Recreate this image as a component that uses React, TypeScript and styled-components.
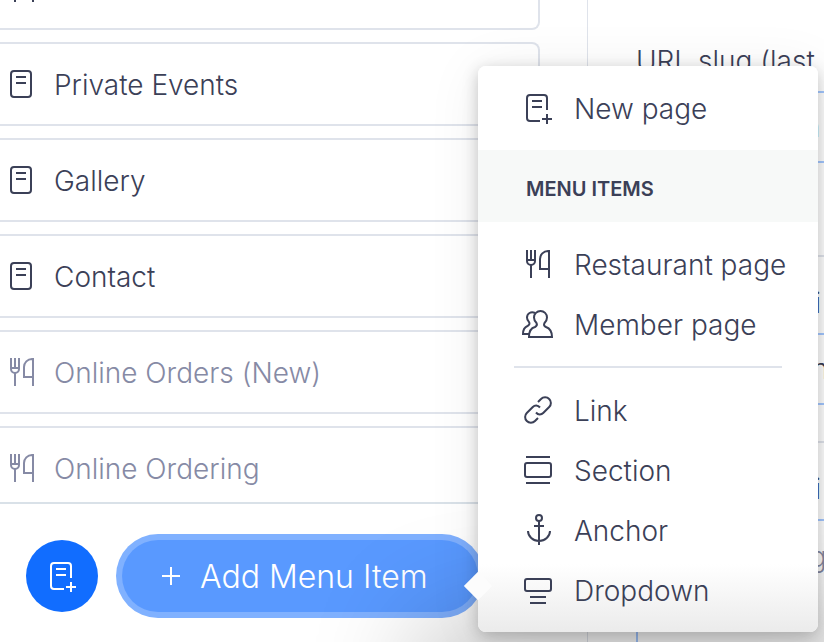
import React from 'react';
import styled, { createGlobalStyle } from 'styled-components';

const ink = '#3b4057';
const muted = '#868aa5';
const line = '#dfe3eb';

const GlobalStyle = createGlobalStyle`
  *, *::before, *::after { box-sizing: border-box; }
  body {
    margin: 0;
    overflow: hidden;
    background: #fff;
    color: ${ink};
    font-family: Inter, sans-serif;
    font-size: 28px;
    font-weight: 300;
    line-height: 40px;
  }
  button, input, textarea { font: inherit; color: inherit; }
`;

const Page = styled.div`
  display: grid;
  grid-template-columns: 588px minmax(0, 1fr);
  height: 100vh;
  overflow: hidden;
`;

const Sidebar = styled.aside`
  display: flex;
  flex-direction: column;
  min-height: 0;
  border-right: 1px solid ${line};
`;

const PageList = styled.ul`
  flex: 1;
  min-height: 0;
  overflow: hidden;
  list-style: none;
  margin: 0;
  padding: 0 47px 0 0;
  display: flex;
  flex-direction: column;
  gap: 12px;

  & > li:first-child { margin-top: -54px; }
`;

const PageRow = styled.li<{ $muted?: boolean }>`
  flex: none;
  display: flex;
  align-items: center;
  gap: 16px;
  height: 84px;
  padding-left: 6px;
  border: 2px solid ${line};
  border-left: 0;
  border-radius: 0 8px 8px 0;
  color: ${(p) => (p.$muted ? muted : ink)};
`;

const Text = styled.span`
  padding-top: 2px;
`;

const Icon = styled.svg`
  flex: none;
  display: block;
  width: 32px;
  height: 32px;
  fill: none;
  stroke: currentColor;
  stroke-width: 2;
`;

const Footer = styled.footer`
  flex: none;
  display: flex;
  gap: 24px;
  padding: 36px 26px 30px;
  border-top: 2px solid #d9e1e8;
`;

const RoundButton = styled.button`
  display: flex;
  align-items: center;
  justify-content: center;
  width: 72px;
  height: 72px;
  padding: 0;
  border: 0;
  border-radius: 50%;
  background: #116dff;
  color: #fff;
`;

const MenuAnchor = styled.div`
  position: relative;
  width: 356px;
`;

const AddButton = styled.button`
  display: flex;
  align-items: center;
  gap: 20px;
  width: 100%;
  height: 72px;
  padding: 0 0 0 40px;
  border: 0;
  border-radius: 36px;
  background: #5999ff;
  box-shadow: 0 0 0 6px #80b1ff;
  color: #fff;
  font-size: 32px;
  white-space: nowrap;
`;

const PlusIcon = styled(Icon)`
  width: 18px;
  height: 18px;
`;

const Popup = styled.div`
  position: absolute;
  z-index: 2;
  left: 100%;
  bottom: -20px;
  width: 340px;
  border-radius: 8px;
  background: linear-gradient(#fff 88%, #ebebeb);
  box-shadow:
    0 4px 16px rgba(0, 0, 0, 0.22),
    0 4px 56px rgba(0, 0, 0, 0.07),
    0 610px 110px 60px rgba(0, 0, 0, 0.22);

  &::before {
    content: '';
    position: absolute;
    left: -10px;
    bottom: 36px;
    width: 20px;
    height: 20px;
    background: #fcfcfc;
    transform: rotate(45deg);
  }
`;

const MenuGroup = styled.div`
  padding: 12px 0;
`;

const MenuHeading = styled.h2`
  margin: 0;
  padding: 21px 48px 15px;
  background: #f7f9f8;
  font-size: 20px;
  line-height: 36px;
  font-weight: 600;
`;

const MenuDivider = styled.hr`
  margin: 12px 36px;
  border: 0;
  border-top: 2px solid ${line};
`;

const MenuItem = styled.button`
  position: relative;
  display: flex;
  align-items: center;
  gap: 20px;
  width: 100%;
  height: 60px;
  padding: 0 0 0 44px;
  border: 0;
  background: none;
  text-align: left;
  white-space: nowrap;
`;

const Settings = styled.main`
  display: flex;
  flex-direction: column;
  min-width: 0;
  overflow: hidden;
  padding-top: 41px;
`;

const Field = styled.label<{ $after: number }>`
  flex: none;
  display: flex;
  flex-direction: column;
  gap: 10px;
  margin: 0 0 ${(p) => p.$after}px 48px;
  white-space: nowrap;
`;

const TextBox = styled.input`
  width: 480px;
  height: 72px;
  padding: 0 24px;
  border: 2px solid #a3c7ff;
  border-radius: 8px;
  background: transparent;
`;

const TextArea = styled.textarea`
  width: 480px;
  height: 200px;
  padding: 16px 24px;
  border: 2px solid #a3c7ff;
  border-radius: 8px;
  background: transparent;
  resize: none;
  &::placeholder { color: ${muted}; opacity: 1; }
`;

const Separator = styled.hr`
  flex: none;
  width: 100%;
  margin: 0 0 26px;
  border: 0;
  border-top: 2px solid ${line};
`;

const PageIcon = () => (
  <Icon viewBox="0 0 32 32" aria-hidden="true">
    <rect x="5" y="3" width="20" height="26" rx="3" />
    <path d="M10 9h10M10 15h10" />
  </Icon>
);

const NewPageIcon = () => (
  <Icon viewBox="0 0 32 32" aria-hidden="true">
    <path d="M18 29H8a3 3 0 0 1-3-3V6a3 3 0 0 1 3-3h14a3 3 0 0 1 3 3v12M10 9h10M10 15h10M20 27h10M25 22v10" />
  </Icon>
);

const CutleryIcon = () => (
  <Icon viewBox="0 0 32 32" aria-hidden="true">
    <path d="M5 2v11a4 4 0 0 0 4 4h0a4 4 0 0 0 4-4V2M9 2v10M5 12h8M9 17v13" />
    <path d="M27 30V3h-1a8 8 0 0 0-8 8v10h9" />
  </Icon>
);

const MembersIcon = () => (
  <Icon viewBox="0 0 32 32" aria-hidden="true">
    <path d="M7 29c0-6 2-9 6-10 2-1 2.500-2 1.500-4C13 13.500 12 12 12 9.500a6.500 6.500 0 0 1 13 0c0 2.500-1 4-2.500 5.500-1 2-.5 3 1.500 4 4 1.500 6 4.500 6 10z" />
    <path d="M13 5C9 3 5 5.500 5 9.500c0 2 1 3 2 4.500s.5 3-1.500 4C2 19.500 1 21.500 1 26h7" />
  </Icon>
);

const LinkIcon = () => (
  <Icon viewBox="0 0 32 32" aria-hidden="true">
    <path d="M16 8l3-3a5.600 5.600 0 0 1 8.200 0 5.600 5.600 0 0 1 0 8l-6 6c-2 2-5 2-7.200-.5" />
    <path d="M16 24l-3 3a5.600 5.600 0 0 1-8.200 0 5.600 5.600 0 0 1 0-8l6-6c2-2 5-2 7.200.5" />
  </Icon>
);

const SectionIcon = () => (
  <Icon viewBox="0 0 32 32" aria-hidden="true">
    <path d="M4 3h24M4 29h24" />
    <rect x="3" y="9" width="26" height="14" rx="2" />
  </Icon>
);

const AnchorIcon = () => (
  <Icon viewBox="0 0 32 32" aria-hidden="true">
    <circle cx="17" cy="4" r="3" />
    <path d="M17 7v24M12 12h10M6 17a11 10 0 0 0 22 0" />
  </Icon>
);

const DropdownIcon = () => (
  <Icon viewBox="0 0 32 32" aria-hidden="true">
    <rect x="3" y="5" width="26" height="12" rx="2" />
    <path d="M8 23h16M8 29h16" />
  </Icon>
);

export default function App() {
  return (
    <>
      <GlobalStyle />
      <Page>
        <Sidebar>
          <PageList>
            <PageRow><CutleryIcon /></PageRow>
            <PageRow><PageIcon /><Text>Private Events</Text></PageRow>
            <PageRow><PageIcon /><Text>Gallery</Text></PageRow>
            <PageRow><PageIcon /><Text>Contact</Text></PageRow>
            <PageRow $muted><CutleryIcon /><Text>Online Orders (New)</Text></PageRow>
            <PageRow $muted><CutleryIcon /><Text>Online Ordering</Text></PageRow>
          </PageList>
          <Footer>
            <RoundButton type="button" aria-label="New page"><NewPageIcon /></RoundButton>
            <MenuAnchor>
              <AddButton type="button" aria-haspopup="menu" aria-expanded="true">
                <PlusIcon viewBox="0 0 18 18" aria-hidden="true"><path d="M9 0v18M0 9h18" /></PlusIcon>
                <Text>Add Menu Item</Text>
              </AddButton>
              <Popup>
                <MenuGroup>
                  <MenuItem type="button"><NewPageIcon /><Text>New page</Text></MenuItem>
                </MenuGroup>
                <MenuHeading>MENU ITEMS</MenuHeading>
                <MenuGroup>
                  <MenuItem type="button"><CutleryIcon /><Text>Restaurant page</Text></MenuItem>
                  <MenuItem type="button"><MembersIcon /><Text>Member page</Text></MenuItem>
                  <MenuDivider />
                  <MenuItem type="button"><LinkIcon /><Text>Link</Text></MenuItem>
                  <MenuItem type="button"><SectionIcon /><Text>Section</Text></MenuItem>
                  <MenuItem type="button"><AnchorIcon /><Text>Anchor</Text></MenuItem>
                  <MenuItem type="button"><DropdownIcon /><Text>Dropdown</Text></MenuItem>
                </MenuGroup>
              </Popup>
            </MenuAnchor>
          </Footer>
        </Sidebar>
        <Settings>
          <Field $after={92}>
            URL slug (last part)
            <TextBox defaultValue="gatering+on" />
          </Field>
          <Separator />
          <Field $after={36}>
            Title tag (Movi
            <TextBox defaultValue="Catering &amp; inn" />
          </Field>
          <Separator />
          <Field $after={0}>
            Meta descripti
            <TextArea placeholder="Write an engaging text" />
          </Field>
        </Settings>
      </Page>
    </>
  );
}
